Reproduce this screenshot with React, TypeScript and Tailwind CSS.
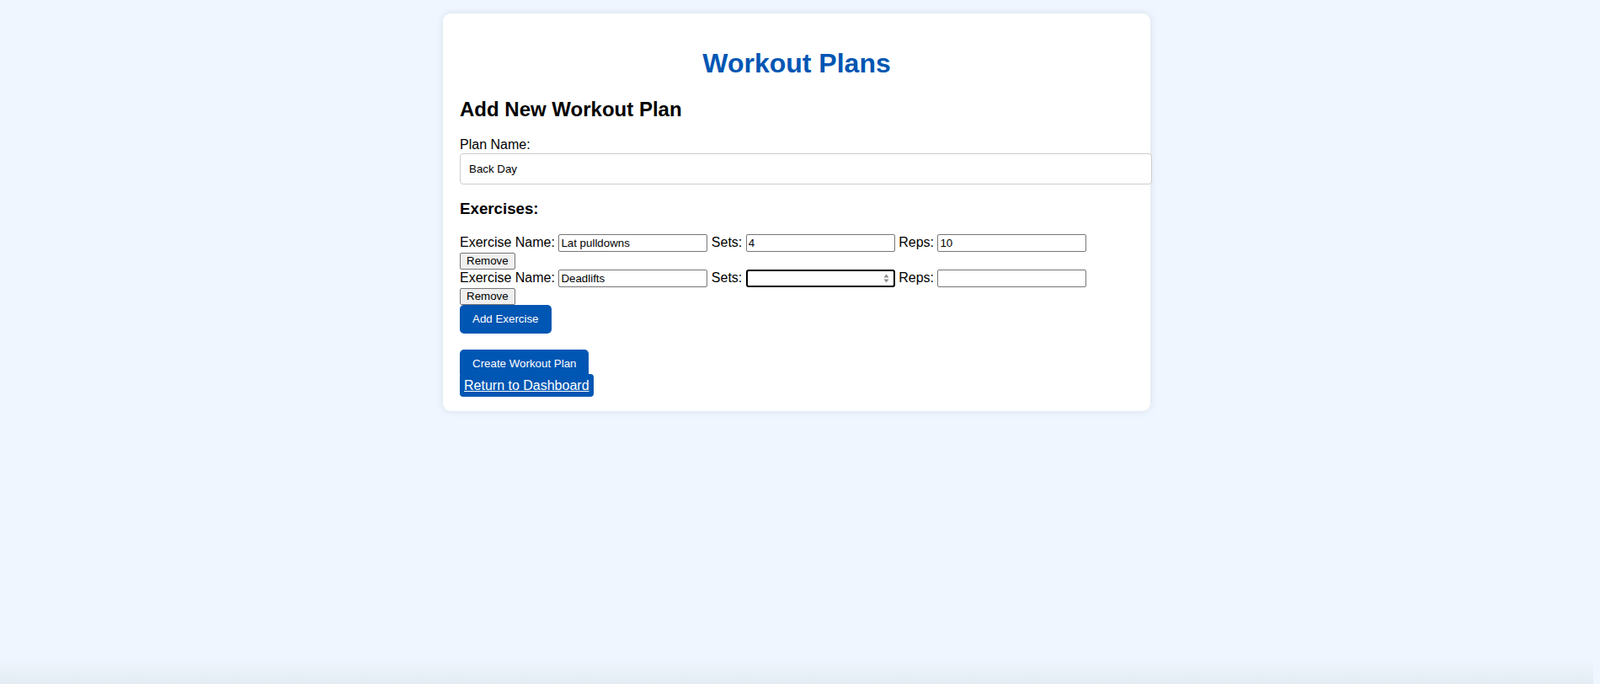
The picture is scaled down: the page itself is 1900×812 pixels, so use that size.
import React from 'react';

type Exercise = { name: string; sets: string; reps: string; focusSets?: boolean };

const exercises: Exercise[] = [
  { name: 'Lat pulldowns', sets: '4', reps: '10' },
  { name: 'Deadlifts', sets: '', reps: '', focusSets: true },
];

const fieldClass =
  'box-border inline-block h-[21px] w-[177px] rounded-[2px] border border-[#767676] bg-white px-[2px] py-[1px] align-baseline text-[13.33px] leading-[15px] text-black outline-none';

const SpinnerIcon: React.FC = () => (
  <svg width="7" height="11" viewBox="0 0 7 11" className="absolute right-[7px] top-[5px]">
    <path d="M3.5 0.5 L6.5 4.5 L0.5 4.5 Z" fill="#8a8a8a" />
    <path d="M3.5 10.5 L6.5 6.5 L0.5 6.5 Z" fill="#8a8a8a" />
  </svg>
);

const ExerciseRow: React.FC<{ exercise: Exercise }> = ({ exercise }) => (
  <div className="text-[16px] leading-[19.6px]">
    Exercise Name: <input className={fieldClass} value={exercise.name} readOnly /> Sets:{' '}
    {exercise.focusSets ? (
      <span className="relative inline-block align-baseline">
        <input
          className="box-border inline-block h-[21px] w-[177px] rounded-[3px] border-2 border-black bg-white px-[2px] py-0 align-baseline text-[13.33px] leading-[15px] outline-none"
          value={exercise.sets}
          readOnly
        />
        <SpinnerIcon />
      </span>
    ) : (
      <input className={fieldClass} value={exercise.sets} readOnly />
    )}{' '}
    Reps: <input className={fieldClass} value={exercise.reps} readOnly />{' '}
    <button className="box-border inline-block h-[20px] rounded-[2px] border border-[#767676] bg-[#efefef] px-[7px] py-0 align-baseline text-[13.33px] leading-[16px] text-black">
      Remove
    </button>
  </div>
);

export default function App() {
  return (
    <div className="flex min-h-screen flex-col bg-[#eff6ff] pr-[8px] font-['Liberation_Sans',Arial,sans-serif] text-black">
      <div className="mx-auto mt-4 w-[840px] rounded-[9px] bg-white p-5 shadow-[0_0_10px_rgba(0,0,0,0.1)]">
        <h1 className="my-[21.44px] text-center text-[32px] font-bold leading-[36.8px] text-[#0056b3]">
          Workout Plans
        </h1>
        <h2 className="mb-[19.92px] text-[24px] font-bold leading-[27.6px]">Add New Workout Plan</h2>

        <label className="block text-[16px] leading-[18.4px]">Plan Name:</label>
        <input
          className="box-content block w-[800px] rounded-[4px] border border-[#ccc] bg-white px-[10px] py-[10px] text-[13.33px] leading-[15px] outline-none"
          value="Back Day"
          readOnly
        />

        <h3 className="my-[18.72px] text-[18.72px] font-bold leading-[21.5px]">Exercises:</h3>

        <div>
          {exercises.map((ex, i) => (
            <ExerciseRow key={i} exercise={ex} />
          ))}
        </div>

        <button className="block rounded-[5px] bg-[#0056b3] px-[15px] py-[9.5px] text-[13.33px] leading-[15.33px] text-white">
          Add Exercise
        </button>

        <button className="mt-[19px] block rounded-[5px] bg-[#0056b3] px-[15px] py-[9.5px] text-[13.33px] leading-[15.33px] text-white">
          Create Workout Plan
        </button>
        <div className="text-[16px] leading-[18.4px]">
          <a href="#" className="rounded-[4px] bg-[#0056b3] p-[5px] text-white underline">
            Return to Dashboard
          </a>
        </div>
      </div>
      <div className="mt-auto h-[32px] bg-gradient-to-b from-[#eff6ff] to-[#e4ecf3]" />
    </div>
  );
}
